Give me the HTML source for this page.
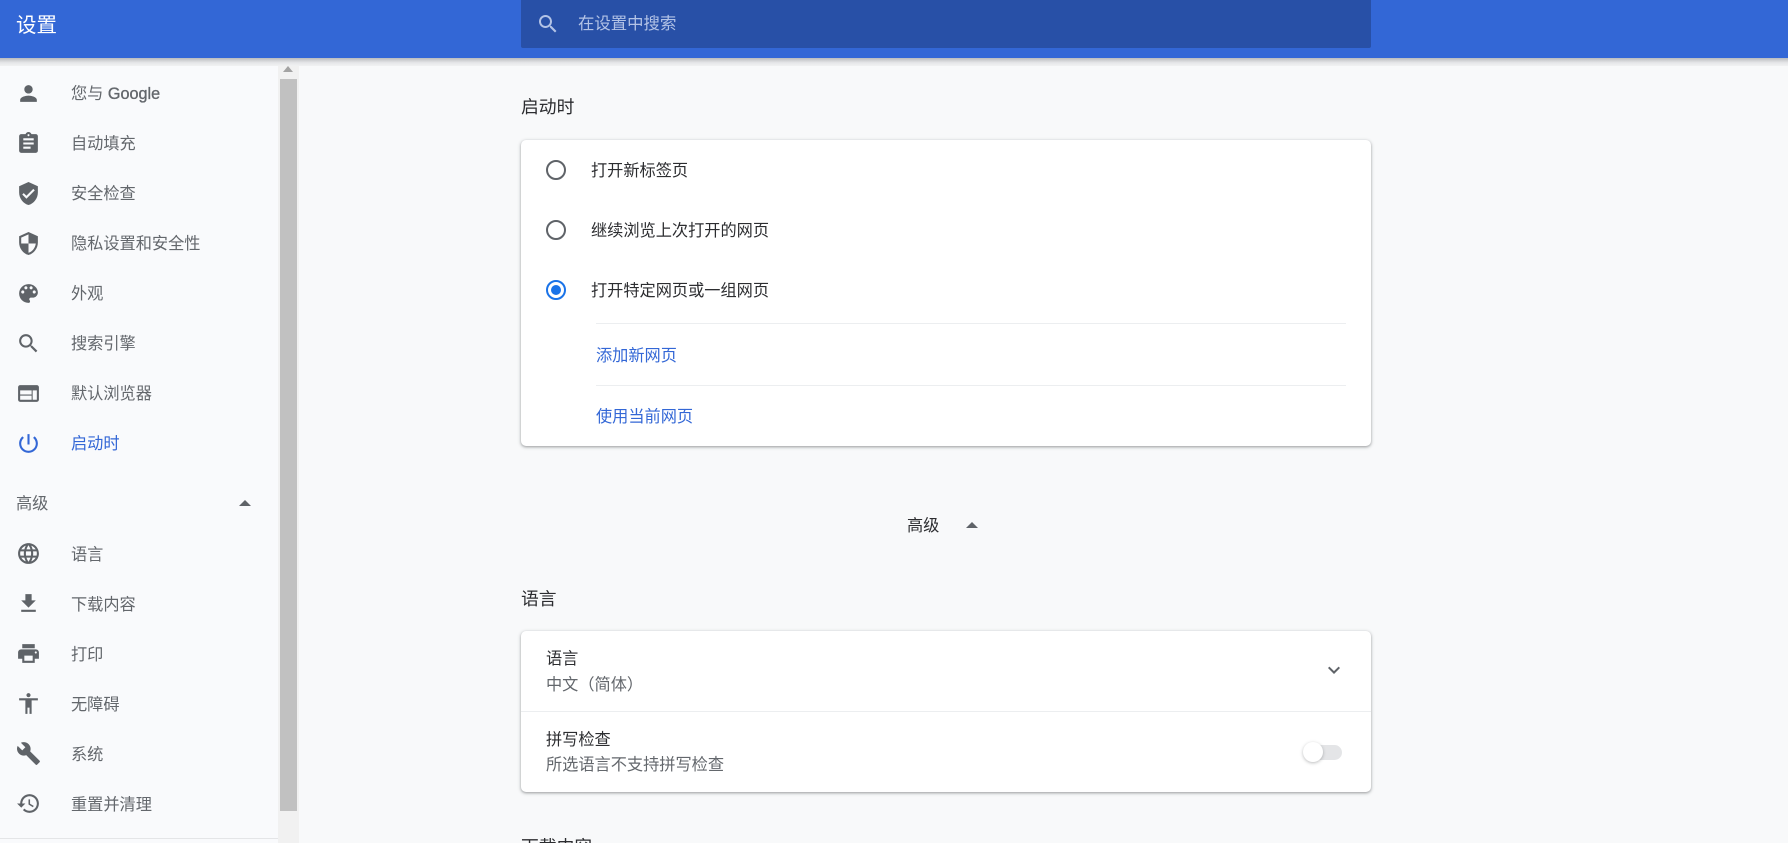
<!DOCTYPE html>
<html lang="zh-CN">
<head>
<meta charset="utf-8">
<title>设置</title>
<style>
html,body{margin:0;padding:0;width:1788px;height:843px;overflow:hidden;background:#f8f9fa;}
body{position:relative;font-family:"Liberation Sans","Noto Sans CJK SC",sans-serif;font-size:16.2px;color:#2c2d30;}
.t{position:absolute;line-height:24px;height:24px;white-space:nowrap;}
.ic{position:absolute;width:25px;height:25px;fill:#5f6368;left:16px;}
.nav{left:71px;color:#63676c;}
.card{position:absolute;left:521px;width:850px;background:#fff;border-radius:5px;box-shadow:0 1px 2px rgba(60,64,67,.35),0 1px 3px 1px rgba(60,64,67,.15);}
.radio{position:absolute;left:546px;width:16px;height:16px;border:2px solid #5f6368;border-radius:50%;}
.hr{position:absolute;height:1px;background:#eceef0;}
</style>
</head>
<body>
<div style="position:absolute;left:0;top:58px;width:1788px;height:8px;background:linear-gradient(#b9bbbe,#e6e7e9 60%,#f1f2f3);z-index:3"></div>
<div style="position:absolute;left:0;top:0;width:1788px;height:58px;background:#3367d6;z-index:4"></div>
<div class="t" style="left:16px;top:14px;font-size:20.5px;color:#fff;z-index:5">设置</div>
<div style="position:absolute;left:521px;top:0;width:850px;height:48px;background:#2850a7;border-radius:0 0 2px 2px;z-index:5"></div>
<svg viewBox="0 0 24 24" style="position:absolute;left:536px;top:12px;width:24px;height:24px;fill:#b3c3e6;z-index:6"><path d="M15.5 14h-.79l-.28-.27C15.41 12.59 16 11.11 16 9.5 16 5.91 13.09 3 9.5 3S3 5.91 3 9.5 5.91 16 9.5 16c1.61 0 3.09-.59 4.23-1.57l.27.28v.79l5 4.99L20.49 19l-4.99-5zm-6 0C7.01 14 5 11.99 5 9.5S7.01 5 9.5 5 14 7.01 14 9.5 11.99 14 9.5 14z"/></svg>
<div class="t" style="left:578px;top:12px;font-size:16.4px;color:#b3c3e6;z-index:6">在设置中搜索</div>

<!-- sidebar -->
<div style="position:absolute;left:0;top:58px;width:278px;height:785px;background:#f9fafc"></div>
<div style="position:absolute;left:278px;top:58px;width:21px;height:785px;background:#f1f1f1"></div>
<div style="position:absolute;left:280px;top:79px;width:17px;height:732px;background:#c1c1c1"></div>
<div style="position:absolute;left:283px;top:66px;width:0;height:0;border-left:5.5px solid transparent;border-right:5.5px solid transparent;border-bottom:6px solid #a3a3a3;z-index:5"></div>
<div class="hr" style="left:0;top:838px;width:278px;height:1px;background:#e4e5e7"></div>

<svg class="ic" style="top:81px" viewBox="0 0 24 24"><path d="M12 12c2.21 0 4-1.79 4-4s-1.79-4-4-4-4 1.79-4 4 1.79 4 4 4zm0 2c-2.67 0-8 1.34-8 4v2h16v-2c0-2.66-5.33-4-8-4z"/></svg>
<div class="t nav" style="top:82px;">您与 <span style="-webkit-text-stroke:.35px #63676c">Google</span></div>
<svg class="ic" style="top:131px" viewBox="0 0 24 24"><path d="M19 3h-4.18C14.4 1.84 13.3 1 12 1c-1.3 0-2.4.84-2.82 2H5c-1.1 0-2 .9-2 2v14c0 1.1.9 2 2 2h14c1.1 0 2-.9 2-2V5c0-1.1-.9-2-2-2zm-7 0c.55 0 1 .45 1 1s-.45 1-1 1-1-.45-1-1 .45-1 1-1zm2 14H7v-2h7v2zm3-4H7v-2h10v2zm0-4H7V7h10v2z"/></svg>
<div class="t nav" style="top:132px;">自动填充</div>
<svg class="ic" style="top:181px" viewBox="0 0 24 24"><path d="M12 1L3 5v6c0 5.55 3.84 10.74 9 12 5.16-1.26 9-6.45 9-12V5l-9-4zm-2 16l-4-4 1.41-1.41L10 14.17l6.59-6.59L18 9l-8 8z"/></svg>
<div class="t nav" style="top:182px;">安全检查</div>
<svg class="ic" style="top:231px" viewBox="0 0 24 24"><path d="M12 1L3 5v6c0 5.55 3.84 10.74 9 12 5.16-1.26 9-6.45 9-12V5l-9-4zm0 10.99h7c-.53 4.12-3.28 7.79-7 8.94V12H5V6.3l7-3.11v8.8z"/></svg>
<div class="t nav" style="top:232px;">隐私设置和安全性</div>
<svg class="ic" style="top:281px" viewBox="0 0 24 24"><path d="M12 3c-4.97 0-9 4.03-9 9s4.03 9 9 9c.83 0 1.5-.67 1.5-1.5 0-.39-.15-.74-.39-1.01-.23-.26-.38-.61-.38-.99 0-.83.67-1.5 1.5-1.5H16c2.76 0 5-2.24 5-5 0-4.42-4.03-8-9-8zm-5.5 9c-.83 0-1.5-.67-1.5-1.5S5.67 9 6.5 9 8 9.67 8 10.5 7.33 12 6.5 12zm3-4C8.67 8 8 7.33 8 6.5S8.67 5 9.5 5s1.5.67 1.5 1.5S10.33 8 9.5 8zm5 0c-.83 0-1.5-.67-1.5-1.5S13.67 5 14.5 5s1.5.67 1.5 1.5S15.33 8 14.5 8zm3 4c-.83 0-1.5-.67-1.5-1.5S16.67 9 17.5 9s1.5.67 1.5 1.5-.67 1.5-1.5 1.5z"/></svg>
<div class="t nav" style="top:282px;">外观</div>
<svg class="ic" style="top:331px" viewBox="0 0 24 24"><path d="M15.5 14h-.79l-.28-.27C15.41 12.59 16 11.11 16 9.5 16 5.91 13.09 3 9.5 3S3 5.91 3 9.5 5.91 16 9.5 16c1.61 0 3.09-.59 4.23-1.57l.27.28v.79l5 4.99L20.49 19l-4.99-5zm-6 0C7.01 14 5 11.99 5 9.5S7.01 5 9.5 5 14 7.01 14 9.5 11.99 14 9.5 14z"/></svg>
<div class="t nav" style="top:332px;">搜索引擎</div>
<svg class="ic" style="top:381px" viewBox="0 0 24 24"><path d="M20 4H4c-1.1 0-1.99.9-1.99 2L2 18c0 1.1.9 2 2 2h16c1.1 0 2-.9 2-2V6c0-1.1-.9-2-2-2zm-5 14H4v-4h11v4zm0-5H4V9h11v4zm5 5h-4V9h4v9z"/></svg>
<div class="t nav" style="top:382px;">默认浏览器</div>
<svg class="ic" style="top:431px;fill:#3367d6" viewBox="0 0 24 24"><path d="M13 3h-2v10h2V3zm4.83 2.17l-1.42 1.42C17.99 7.86 19 9.81 19 12c0 3.87-3.13 7-7 7s-7-3.13-7-7c0-2.19 1.01-4.14 2.58-5.42L6.17 5.17C4.23 6.82 3 9.26 3 12c0 4.97 4.03 9 9 9s9-4.03 9-9c0-2.74-1.23-5.18-3.17-6.83z"/></svg>
<div class="t nav" style="top:432px;color:#3367d6">启动时</div>
<div class="t" style="left:16px;top:492px;color:#63676c">高级</div>
<div style="position:absolute;left:239px;top:500px;width:0;height:0;border-left:6px solid transparent;border-right:6px solid transparent;border-bottom:6px solid #5f6368"></div>
<svg class="ic" style="top:541px" viewBox="0 0 24 24"><path d="M11.99 2C6.47 2 2 6.48 2 12s4.47 10 9.99 10C17.52 22 22 17.52 22 12S17.52 2 11.99 2zm6.93 6h-2.95c-.32-1.25-.78-2.45-1.38-3.56 1.84.63 3.37 1.91 4.33 3.56zM12 4.04c.83 1.2 1.48 2.53 1.91 3.96h-3.82c.43-1.43 1.08-2.76 1.91-3.96zM4.26 14C4.1 13.36 4 12.69 4 12s.1-1.36.26-2h3.38c-.08.66-.14 1.32-.14 2 0 .68.06 1.34.14 2H4.26zm.82 2h2.95c.32 1.25.78 2.45 1.38 3.56-1.84-.63-3.37-1.9-4.33-3.56zm2.95-8H5.08c.96-1.66 2.49-2.93 4.33-3.56C8.81 5.55 8.35 6.75 8.03 8zM12 19.96c-.83-1.2-1.48-2.53-1.91-3.96h3.82c-.43 1.43-1.08 2.76-1.91 3.96zM14.34 14H9.66c-.09-.66-.16-1.32-.16-2 0-.68.07-1.35.16-2h4.68c.09.65.16 1.32.16 2 0 .68-.07 1.34-.16 2zm.25 5.56c.6-1.11 1.06-2.31 1.38-3.56h2.95c-.96 1.65-2.49 2.93-4.33 3.56zM16.36 14c.08-.66.14-1.32.14-2 0-.68-.06-1.34-.14-2h3.38c.16.64.26 1.31.26 2s-.1 1.36-.26 2h-3.38z"/></svg>
<div class="t nav" style="top:543px;">语言</div>
<svg class="ic" style="top:591px" viewBox="0 0 24 24"><path d="M19 9h-4V3H9v6H5l7 7 7-7zM5 18v2h14v-2H5z"/></svg>
<div class="t nav" style="top:593px;">下载内容</div>
<svg class="ic" style="top:641px" viewBox="0 0 24 24"><path d="M19 8H5c-1.66 0-3 1.34-3 3v6h4v4h12v-4h4v-6c0-1.66-1.34-3-3-3zm-3 11H8v-5h8v5zm3-7c-.55 0-1-.45-1-1s.45-1 1-1 1 .45 1 1-.45 1-1 1zm-1-9H6v4h12V3z"/></svg>
<div class="t nav" style="top:643px;">打印</div>
<svg class="ic" style="top:691px" viewBox="0 0 24 24"><path d="M12 2c1.1 0 2 .9 2 2s-.9 2-2 2-2-.9-2-2 .9-2 2-2zm9 7h-6v13h-2v-6h-2v6H9V9H3V7h18v2z"/></svg>
<div class="t nav" style="top:693px;">无障碍</div>
<svg class="ic" style="top:741px" viewBox="0 0 24 24"><path d="M22.7 19l-9.1-9.1c.9-2.3.4-5-1.5-6.9-2-2-5-2.4-7.4-1.3L9 6 6 9 1.6 4.7C.4 7.1.9 10.1 2.9 12.1c1.9 1.9 4.6 2.4 6.9 1.5l9.1 9.1c.4.4 1 .4 1.4 0l2.3-2.3c.5-.4.5-1.1.1-1.4z"/></svg>
<div class="t nav" style="top:743px;">系统</div>
<svg class="ic" style="top:791px" viewBox="0 0 24 24"><path d="M13 3c-4.97 0-9 4.03-9 9H1l3.89 3.89.07.14L9 12H6c0-3.87 3.13-7 7-7s7 3.13 7 7-3.13 7-7 7c-1.93 0-3.68-.79-4.94-2.06l-1.42 1.42C8.27 19.99 10.51 21 13 21c4.97 0 9-4.03 9-9s-4.03-9-9-9zm-1 5v5l4.28 2.54.72-1.21-3.5-2.08V8H12z"/></svg>
<div class="t nav" style="top:793px;">重置并清理</div>

<!-- main -->
<div class="t" style="left:521px;top:95px;font-size:17.8px;">启动时</div>
<div class="card" style="top:140px;height:306px;"></div>
<div class="radio" style="top:160px"></div>
<div class="t" style="left:591px;top:159px;">打开新标签页</div>
<div class="radio" style="top:220px"></div>
<div class="t" style="left:591px;top:219px;">继续浏览上次打开的网页</div>
<div class="radio" style="top:280px;border-color:#1a73e8"></div>
<div style="position:absolute;left:551px;top:285px;width:10px;height:10px;border-radius:50%;background:#1a73e8"></div>
<div class="t" style="left:591px;top:279px;">打开特定网页或一组网页</div>
<div class="hr" style="left:596px;top:323px;width:750px"></div>
<div class="t" style="left:596px;top:344px;color:#3367d6">添加新网页</div>
<div class="hr" style="left:596px;top:385px;width:750px"></div>
<div class="t" style="left:596px;top:405px;color:#3367d6">使用当前网页</div>

<div class="t" style="left:907px;top:514px;">高级</div>
<div style="position:absolute;left:966px;top:522px;width:0;height:0;border-left:6px solid transparent;border-right:6px solid transparent;border-bottom:6px solid #5f6368"></div>

<div class="t" style="left:521px;top:587px;font-size:17.8px;">语言</div>
<div class="card" style="top:631px;height:161px;"></div>
<div class="t" style="left:546px;top:647px;">语言</div>
<div class="t" style="left:546px;top:673px;color:#63676c">中文（简体）</div>
<svg viewBox="0 0 24 24" style="position:absolute;left:1322px;top:658px;width:24px;height:24px;fill:#5f6368"><path d="M16.59 8.59L12 13.17 7.41 8.59 6 10l6 6 6-6z"/></svg>
<div class="hr" style="left:521px;top:711px;width:850px"></div>
<div class="t" style="left:546px;top:728px;">拼写检查</div>
<div class="t" style="left:546px;top:753px;color:#63676c">所选语言不支持拼写检查</div>
<div style="position:absolute;left:1312px;top:745px;width:30px;height:15px;border-radius:8px;background:#e4e5e7"></div>
<div style="position:absolute;left:1303px;top:742px;width:20px;height:20px;border-radius:50%;background:#fff;box-shadow:0 1px 3px rgba(60,64,67,.35)"></div>

<div class="t" style="left:521px;top:835px;font-size:17.8px;">下载内容</div>
</body>
</html>
